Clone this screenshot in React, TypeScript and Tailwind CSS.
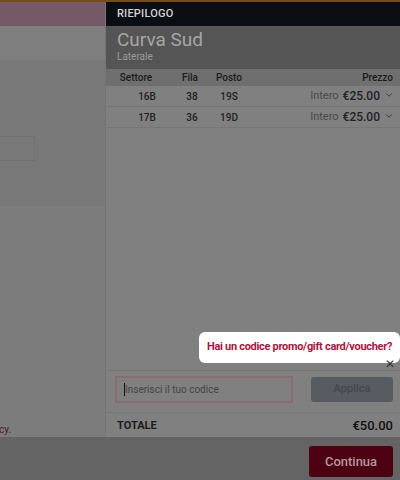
import { ChevronDown } from "lucide-react";

interface Seat {
  settore: string;
  fila: string;
  posto: string;
  tipo: string;
  prezzo: string;
}

const seats: Seat[] = [
  { settore: "16B", fila: "38", posto: "19S", tipo: "Intero", prezzo: "€25.00" },
  { settore: "17B", fila: "36", posto: "19D", tipo: "Intero", prezzo: "€25.00" },
];

export default function App() {
  return (
    <div
      className="relative w-[400px] h-[480px] flex flex-col overflow-hidden bg-[#808080]"
      style={{ fontFamily: "Roboto, 'Liberation Sans', sans-serif" }}
    >
      <div className="h-[2px] bg-[#7a4a16]" />

      <div className="flex flex-1 min-h-0">
        {/* page behind the drawer */}
        <div className="w-[106px] flex flex-col border-r border-[#747474] bg-[#7b7c7b]">
          <div className="h-[24px] bg-[#745a66]" />
          <div className="h-[34px] bg-[#7e7f7e]" />
          <div className="h-[146px] bg-[#787878] pt-[76px]">
            <div className="w-[35px] h-[25px] border border-l-0 border-[#717171]" />
          </div>
          <div className="flex-1 flex items-end pb-[0px]">
            <span className="text-[10px] text-[#4d1a2a] -ml-[1px] leading-[14px]">cy.</span>
          </div>
        </div>

        {/* riepilogo drawer */}
        <div className="flex-1 flex flex-col bg-[#808080]">
          <div className="h-[24px] bg-[#0b0e13] flex items-center px-[11px]">
            <span className="text-[11px] font-medium text-[#d4d4d4] tracking-[0.2px]">RIEPILOGO</span>
          </div>
          <div className="h-[43px] bg-[#555555] px-[11px] pt-[3px]">
            <div className="text-[19px] leading-[22px] text-[#a6a6a6]">Curva Sud</div>
            <div className="text-[10px] leading-[12px] text-[#9a9a9a]">Laterale</div>
          </div>

          <div className="h-[17px] bg-[#6f6f6f] flex items-center text-[10px] font-medium text-[#1c1c1c]">
            <span className="w-[60px] text-center">Settore</span>
            <span className="w-[48px] text-center">Fila</span>
            <span className="w-[30px] text-center">Posto</span>
            <span className="flex-1 text-right pr-[7px]">Prezzo</span>
          </div>
          {seats.map((s) => (
            <div
              key={s.settore}
              className="h-[21px] flex items-center border-b border-[#767676] text-[10px] font-medium text-[#222222]"
            >
              <span className="w-[60px] text-center pl-[22px]">{s.settore}</span>
              <span className="w-[48px] text-center pl-[4px]">{s.fila}</span>
              <span className="w-[30px] text-center">{s.posto}</span>
              <span className="flex-1 flex items-center justify-end pr-[6px] gap-[4px]">
                <span className="text-[11px] font-normal text-[#4a4a4a]">{s.tipo}</span>
                <span className="text-[12px] text-[#222222]">{s.prezzo}</span>
                <ChevronDown size={10} strokeWidth={2.2} className="text-[#333333] -mt-[3px]" />
              </span>
            </div>
          ))}

          <div className="flex-1" />

          <div className="border-t border-[#767676] h-[42px] flex items-center gap-[18px] pl-[9px] pr-[7px] pb-[4px]">
            <div className="w-[178px] h-[27px] border-2 border-[#8a6d73] flex items-center px-[7px]">
              <span className="w-px h-[13px] bg-[#111111]" />
              <span className="text-[10px] text-[#454545]">Inserisci il tuo codice</span>
            </div>
            <button className="flex-1 h-[25px] rounded-[3px] bg-[#585b5f] text-[11px] font-medium text-[#45484c]">
              Applica
            </button>
          </div>

          <div className="border-t border-[#767676] h-[25px] flex items-center justify-between px-[11px] pr-[7px] pt-[2px]">
            <span className="text-[11px] font-bold text-[#1c1c1c]">TOTALE</span>
            <span className="text-[13px] font-medium text-[#111111]">€50.00</span>
          </div>
        </div>
      </div>

      <div className="h-[43px] bg-[#646464] flex items-start justify-end pr-[7px] pt-[9px]">
        <button className="w-[84px] h-[31px] rounded-[3px] bg-[#4d0012] text-[13px] font-medium text-[#b29aa0]">
          Continua
        </button>
      </div>

      {/* tooltip over the overlay */}
      <div className="absolute left-[199px] top-[332px] w-[201px] h-[31px] rounded-[6px] bg-white flex items-center pl-[8px]">
        <span className="text-[11px] font-bold tracking-[-0.3px] text-[#b0123d] whitespace-nowrap">
          Hai un codice promo/gift card/voucher?
        </span>
      </div>
      <span className="absolute left-[385px] top-[358px] text-[12px] leading-[12px] text-[#333333]">✕</span>
    </div>
  );
}
